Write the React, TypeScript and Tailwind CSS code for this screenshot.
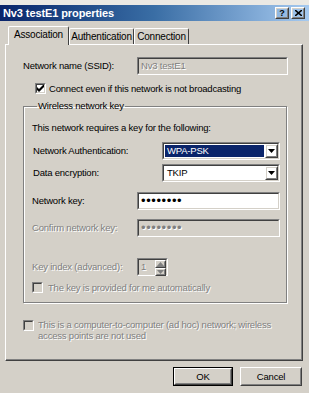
import React from 'react';

const disabledText = 'text-[#808080] [text-shadow:1px_1px_0_#fff]';

const Raised = ({ className = '', children }: { className?: string; children?: React.ReactNode }) => (
  <div className={`border border-t-white border-l-white border-r-[#404040] border-b-[#404040] ${className}`}>
    <div className="w-full h-full border border-t-[#d4d0c8] border-l-[#d4d0c8] border-r-[#808080] border-b-[#808080] flex items-center justify-center">
      {children}
    </div>
  </div>
);

const Sunken = ({
  className = '',
  inner = 'bg-white',
  children,
}: {
  className?: string;
  inner?: string;
  children?: React.ReactNode;
}) => (
  <div className={`border border-t-[#808080] border-l-[#808080] border-r-white border-b-white ${className}`}>
    <div className={`w-full h-full border border-t-[#404040] border-l-[#404040] border-r-[#d4d0c8] border-b-[#d4d0c8] flex items-center ${inner}`}>
      {children}
    </div>
  </div>
);

const CheckBox = ({ checked = false, disabled = false }) => (
  <Sunken className="w-[11px] h-[11px] shrink-0" inner={disabled ? 'bg-[#d4d0c8]' : 'bg-white'}>
    {checked && (
      <svg width="7" height="7" viewBox="0 0 7 7" className="mx-auto">
        <path d="M0 2 L2 4 L7 -1 L7 2 L2 7 L0 5 Z" fill="#000" />
      </svg>
    )}
  </Sunken>
);

const Arrow = ({ up = false, color = '#000' }) => (
  <svg width="7" height="4" viewBox="0 0 7 4">
    <path d={up ? 'M3.5 0 L7 4 L0 4 Z' : 'M0 0 L7 0 L3.5 4 Z'} fill={color} />
  </svg>
);

const Combo = ({ value, selected = false }: { value: string; selected?: boolean }) => (
  <Sunken className="w-[118px] h-[18px]">
    <div className="flex-1 h-full p-px flex">
      <div className={`flex-1 flex items-center pl-[2px] ${selected ? 'bg-[#0a246a] text-white' : 'text-black'}`}>
        {value}
      </div>
    </div>
    <Raised className="w-[13px] h-full">
      <Arrow />
    </Raised>
  </Sunken>
);

const Tab = ({ label, active = false, w }: { label: string; active?: boolean; w: string }) => (
  <div
    className={`${w} flex items-center justify-center border-t border-l border-r border-t-white border-l-white border-r-[#404040] rounded-t-[2px] ${
      active ? 'h-[19px] relative z-10 -mb-px bg-[#d4d0c8] pb-[2px]' : 'h-[16px]'
    }`}
  >
    {label}
  </div>
);

export default function App() {
  return (
    <div className="w-[309px] h-[393px] bg-[#d4d0c8] flex flex-col overflow-hidden text-[9.5px] tracking-[-0.2px] text-black font-['Liberation_Sans',Arial,sans-serif] leading-[12px]">
      <div className="h-[5px] bg-[#ebe9e4]" />
      {/* title bar */}
      <div className="h-[16px] bg-gradient-to-r from-[#0a246a] via-[#3a6ea5] to-[#a6caf0] flex items-center justify-between pl-[3px] pr-[4px]">
        <span className="text-white font-bold text-[11px] tracking-[-0.1px]">Nv3 testE1 properties</span>
        <div className="flex gap-[2px]">
          <Raised className="w-[14px] h-[12px]">
            <span className="font-bold text-[9px] leading-none">?</span>
          </Raised>
          <Raised className="w-[14px] h-[12px]">
            <svg width="7" height="6" viewBox="0 0 7 6">
              <path d="M0 0 L7 6 M7 0 L0 6" stroke="#000" strokeWidth="1.6" />
            </svg>
          </Raised>
        </div>
      </div>

      {/* tabs */}
      <div className="mt-[5px] h-[18px] flex items-end pl-[8px] text-[10px]">
        <Tab label="Association" active w="w-[61px]" />
        <Tab label="Authentication" w="w-[65px]" />
        <Tab label="Connection" w="w-[55px]" />
      </div>

      {/* panel */}
      <div className="ml-[5px] w-[298px] h-[317px] border border-t-white border-l-white border-r-[#404040] border-b-[#404040]">
        <div className="h-full border-r border-b border-r-[#808080] border-b-[#808080] pl-[17px] pt-[12px] flex flex-col">
          <div className="flex items-center h-[18px]">
            <span className="w-[114px]">Network name (SSID):</span>
            <Sunken className="w-[151px] h-[18px]" inner="bg-[#d4d0c8]">
              <span className={`pl-[2px] ${disabledText}`}>Nv3 testE1</span>
            </Sunken>
          </div>

          <div className="flex items-center gap-[3px] mt-[8px] ml-[12px] h-[11px]">
            <CheckBox checked />
            <span>Connect even if this network is not broadcasting</span>
          </div>

          <fieldset className="mt-[6px] w-[264px] border border-[#808080] shadow-[1px_1px_0_#fff,inset_1px_1px_0_#fff] pl-[8px] pb-[9px]">
            <legend className="ml-[5px] px-[1px]">Wireless network key</legend>
            <div className="mt-[10px] h-[12px] flex items-center">This network requires a key for the following:</div>

            <div className="mt-[8px] flex items-center h-[18px]">
              <span className="w-[130px] pl-px">Network Authentication:</span>
              <Combo value="WPA-PSK" selected />
            </div>
            <div className="mt-[4px] flex items-center h-[18px]">
              <span className="w-[130px] pl-px">Data encryption:</span>
              <Combo value="TKIP" />
            </div>

            <div className="mt-[10px] flex items-center h-[18px]">
              <span className="w-[105px]">Network key:</span>
              <Sunken className="w-[143px] h-[18px]">
                <span className="pl-[2px] text-[13px] tracking-[0.6px]">••••••••</span>
              </Sunken>
            </div>
            <div className="mt-[9px] flex items-center h-[18px]">
              <span className={`w-[105px] ${disabledText}`}>Confirm network key:</span>
              <Sunken className="w-[143px] h-[18px]" inner="bg-[#d4d0c8]">
                <span className={`pl-[2px] text-[13px] tracking-[0.6px] ${disabledText}`}>••••••••</span>
              </Sunken>
            </div>

            <div className="mt-[21px] flex items-center h-[18px]">
              <span className={`w-[105px] ${disabledText}`}>Key index (advanced):</span>
              <Sunken className="w-[31px] h-[18px]" inner="bg-[#d4d0c8]">
                <span className={`flex-1 pl-[2px] ${disabledText}`}>1</span>
                <div className="w-[11px] h-full flex flex-col">
                  <Raised className="flex-1 w-full">
                    <Arrow up color="#808080" />
                  </Raised>
                  <Raised className="flex-1 w-full">
                    <Arrow color="#808080" />
                  </Raised>
                </div>
              </Sunken>
            </div>

            <div className="mt-[6px] flex items-center gap-[5px] h-[11px]">
              <CheckBox disabled />
              <span className={disabledText}>The key is provided for me automatically</span>
            </div>
          </fieldset>

          <div className="mt-[16px] flex gap-[4px]">
            <div className="pt-px">
              <CheckBox disabled />
            </div>
            <span className={`leading-[11px] ${disabledText}`}>
              This is a computer-to-computer (ad hoc) network; wireless
              <br />
              access points are not used
            </span>
          </div>
        </div>
      </div>

      {/* buttons */}
      <div className="mt-[6px] flex justify-end gap-[7px] pr-[7px]">
        <div className="border border-black">
          <Raised className="w-[58px] h-[17px]">OK</Raised>
        </div>
        <Raised className="w-[62px] h-[19px]">Cancel</Raised>
      </div>
    </div>
  );
}
